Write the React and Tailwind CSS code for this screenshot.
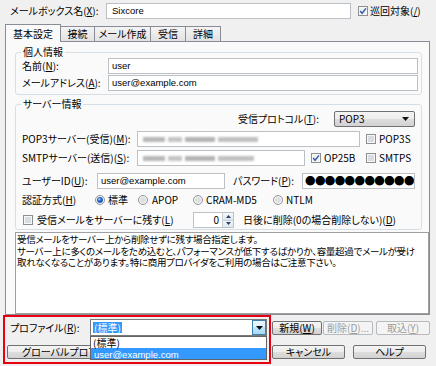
import React from "react";

function U({ children }) {
  return <span className="underline underline-offset-[1px]">{children}</span>;
}

function Check({ checked = false }) {
  return (
    <svg width="10" height="10" viewBox="0 0 10 10" className="block shrink-0">
      <rect x="0.5" y="0.5" width="9" height="9" fill="#f7f7f7" stroke="#8e8f8f" />
      <rect x="2" y="2" width="6" height="6" fill={checked ? "#eef1f5" : "#d9dde3"} />
      {checked && (
        <path d="M2.2 4.9 L4.1 7.2 L8 2.4" fill="none" stroke="#3b5fa8" strokeWidth="1.5" />
      )}
    </svg>
  );
}

function Radio({ checked = false }) {
  return (
    <svg width="10" height="10" viewBox="0 0 10 10" className="block shrink-0">
      <circle cx="5" cy="5" r="4.5" fill="#f5f5f5" stroke="#939393" />
      <circle cx="5" cy="5" r="3" fill={checked ? "#2163c4" : "#dde0e4"} />
      {checked && <circle cx="4.3" cy="4.2" r="1.2" fill="#8cc0f2" />}
    </svg>
  );
}

function Box({ className = "", children }) {
  return (
    <div
      className={
        "flex h-[16px] shrink-0 items-center overflow-hidden whitespace-nowrap border border-[#bcc0c7] bg-white px-[3px] " +
        className
      }
    >
      {children}
    </div>
  );
}

function Latin({ children }) {
  return (
    <span className="text-[9.5px] [font-family:'Liberation_Sans','Noto_Sans',sans-serif]">{children}</span>
  );
}

function Btn({ className = "", disabled = false, children }) {
  return (
    <div
      className={
        "flex shrink-0 items-center justify-center overflow-hidden whitespace-nowrap rounded-[2px] border leading-none " +
        (disabled
          ? "border-[#b6babd] bg-[#f4f4f4] text-[#9c9c9c] "
          : "border-[#707070] bg-[linear-gradient(#f4f4f4_0%,#ececec_50%,#dedede_50%,#d2d2d2_100%)] text-black ") +
        className
      }
    >
      {children}
    </div>
  );
}

function Blur({ w }) {
  return (
    <div className="flex items-center gap-[3px] pl-[2px] blur-[1.2px]">
      <span className="h-[5px] w-[22px] bg-[#b7b7b7]" />
      <span className="h-[5px] w-[14px] bg-[#c4c4c4]" />
      <span className="h-[5px] w-[30px] bg-[#b3b3b3]" />
      <span className="h-[5px] bg-[#c0c0c0]" style={{ width: w }} />
    </div>
  );
}

function ArrowDown() {
  return (
    <svg width="7" height="4" viewBox="0 0 7 4" className="block">
      <path d="M0 0 H7 L3.5 4 Z" fill="#111" />
    </svg>
  );
}

export default function App() {
  return (
    <div className="relative h-[366px] w-[436px] overflow-hidden bg-[#f0f0f0] text-[10px] leading-[12px] text-black [font-family:'Noto_Sans_CJK_JP','Noto_Sans',sans-serif] [font-feature-settings:'palt']">
      {/* header row */}
      <div className="mt-[3px] flex h-[15px] items-center">
        <span className="w-[106px] shrink-0 pl-[10px]">
          メールボックス名(<U>X</U>):
        </span>
        <Box className="h-[15px] w-[245px] pl-[5px]">
          <Latin>Sixcore</Latin>
        </Box>
        <div className="ml-[7px]">
          <Check checked />
        </div>
        <span className="ml-[2px]">
          巡回対象(<U>/</U>)
        </span>
      </div>

      {/* tabs */}
      <div className="mt-[6px] flex h-[17px] items-end pl-[5px]">
        <div className="relative z-10 -mb-px flex h-[18px] w-[56px] items-center justify-center border border-b-0 border-[#898c95] bg-[#fafafa]">
          基本設定
        </div>
        <div className="flex h-[15px] w-[34px] items-center justify-center border-t border-r border-[#898c95] bg-[linear-gradient(#f4f4f4,#e2e2e2)]">
          接続
        </div>
        <div className="flex h-[15px] w-[56px] items-center justify-center border-t border-r border-[#898c95] bg-[linear-gradient(#f4f4f4,#e2e2e2)]">
          メール作成
        </div>
        <div className="flex h-[15px] w-[35px] items-center justify-center border-t border-r border-[#898c95] bg-[linear-gradient(#f4f4f4,#e2e2e2)]">
          受信
        </div>
        <div className="flex h-[15px] w-[35px] items-center justify-center border-t border-r border-[#898c95] bg-[linear-gradient(#f4f4f4,#e2e2e2)]">
          詳細
        </div>
      </div>

      {/* panel */}
      <div className="ml-[5px] flex h-[274px] w-[425px] flex-col border border-[#898c95] bg-[#fafafa]">
        <fieldset className="mt-[4px] ml-[9px] mr-[7px] rounded-[3px] border border-[#d5dfe5] pl-[6px] pr-[3px] pb-[3px]">
          <legend className="-ml-[1px] px-[2px] leading-[12px]">個人情報</legend>
          <div className="flex h-[16px] items-center">
            <span className="w-[86px] shrink-0">
              名前(<U>N</U>):
            </span>
            <Box className="flex-1">
              <Latin>user</Latin>
            </Box>
          </div>
          <div className="mt-[1px] flex h-[16px] items-center">
            <span className="w-[86px] shrink-0">
              メールアドレス(<U>A</U>):
            </span>
            <Box className="flex-1">
              <Latin>user@example.com</Latin>
            </Box>
          </div>
        </fieldset>

        <fieldset className="mt-[3px] ml-[9px] mr-[7px] rounded-[3px] border border-[#d5dfe5] pl-[6px] pr-[3px] pb-[1px]">
          <legend className="-ml-[1px] px-[2px] leading-[12px]">サーバー情報</legend>
          {/* protocol */}
          <div className="mt-[1px] flex h-[16px] items-center justify-end pr-[3px]">
            <span>
              受信プロトコル(<U>T</U>):
            </span>
            <div className="ml-[15px] flex h-[16px] w-[81px] items-center justify-between rounded-[2px] border border-[#707070] bg-[linear-gradient(#f4f4f4_0%,#ececec_50%,#dedede_50%,#d2d2d2_100%)] pl-[4px] pr-[5px]">
              <span>POP3</span>
              <ArrowDown />
            </div>
          </div>
          {/* pop3 */}
          <div className="mt-[4px] flex h-[16px] items-center">
            <span className="w-[115px] shrink-0">
              POP3サーバー(受信)(<U>M</U>):
            </span>
            <Box className="w-[223px]">
              <Blur w="40px" />
            </Box>
            <div className="ml-[6px]">
              <Check />
            </div>
            <span className="ml-[3px]">POP3S</span>
          </div>
          {/* smtp */}
          <div className="mt-[3px] flex h-[16px] items-center">
            <span className="w-[115px] shrink-0">
              SMTPサーバー(送信)(<U>S</U>):
            </span>
            <Box className="w-[168px]">
              <Blur w="36px" />
            </Box>
            <div className="ml-[6px] flex w-[55px] shrink-0 items-center">
              <Check checked />
              <span className="ml-[3px]">OP25B</span>
            </div>
            <Check />
            <span className="ml-[3px]">SMTPS</span>
          </div>
          {/* user */}
          <div className="mt-[7px] flex h-[16px] items-center">
            <span className="w-[75px] shrink-0">
              ユーザーID(<U>U</U>):
            </span>
            <Box className="w-[128px]">
              <Latin>user@example.com</Latin>
            </Box>
            <span className="ml-[8px] w-[69px] shrink-0">
              パスワード(<U>P</U>):
            </span>
            <Box className="w-[113px] pl-[2px] text-[10.5px] tracking-[-0.6px]">●●●●●●●●●●●●</Box>
          </div>
          {/* auth */}
          <div className="mt-[4px] flex h-[14px] items-center">
            <span className="w-[73px] shrink-0">
              認証方式(<U>H</U>)
            </span>
            <div className="flex w-[43px] shrink-0 items-center">
              <Radio checked />
              <span className="ml-[3px]">標準</span>
            </div>
            <div className="flex w-[55px] shrink-0 items-center">
              <Radio />
              <span className="ml-[4px]">APOP</span>
            </div>
            <div className="flex w-[80px] shrink-0 items-center">
              <Radio />
              <span className="ml-[3px]">CRAM-MD5</span>
            </div>
            <div className="flex items-center">
              <Radio />
              <span className="ml-[3px]">NTLM</span>
            </div>
          </div>
          {/* keep */}
          <div className="mt-[5px] flex h-[16px] items-center">
            <div className="ml-[1px]">
              <Check />
            </div>
            <span className="ml-[4px] w-[156px] shrink-0">
              受信メールをサーバーに残す(<U>L</U>)
            </span>
            <div className="flex h-[16px] w-[41px] shrink-0 items-center justify-end border border-[#bcc0c7] bg-white">
              <span className="mr-[3px]">0</span>
              <div className="flex h-[14px] w-[11px] flex-col border-l border-[#c9cdd3]">
                <div className="flex flex-1 items-center justify-center border-b border-[#c9cdd3] bg-[linear-gradient(#f6f9fc,#dbe6f2)]">
                  <svg width="5" height="3" viewBox="0 0 5 3" className="block">
                    <path d="M0 3 H5 L2.5 0 Z" fill="#2c3e5a" />
                  </svg>
                </div>
                <div className="flex flex-1 items-center justify-center bg-[linear-gradient(#f6f9fc,#dbe6f2)]">
                  <svg width="5" height="3" viewBox="0 0 5 3" className="block">
                    <path d="M0 0 H5 L2.5 3 Z" fill="#2c3e5a" />
                  </svg>
                </div>
              </div>
            </div>
            <span className="ml-[9px]">
              日後に削除(0の場合削除しない)(<U>D</U>)
            </span>
          </div>
        </fieldset>

        {/* description */}
        <div className="mt-[2px] ml-[9px] flex-1 overflow-hidden whitespace-nowrap border border-[#a0a0a0] bg-white pl-[1px] pt-[1px] text-[9.5px] leading-[11.5px] tracking-[-0.3px]">
          <div>受信メールをサーバー上から削除せずに残す場合指定します。</div>
          <div>サーバー上に多くのメールをため込むと、パフォーマンスが低下するばかりか、容量超過でメールが受け</div>
          <div>取れなくなることがあります。特に商用プロバイダをご利用の場合はご注意下さい。</div>
        </div>
      </div>

      {/* bottom row 1 */}
      <div className="mt-[4px] flex h-[17px] items-center">
        <span className="w-[90px] shrink-0 pl-[10px]">
          プロファイル(<U>R</U>):
        </span>
        <div className="flex h-[17px] w-[177px] shrink-0 items-center border border-[#7a7a7a] bg-white pl-[2px]">
          <span className="bg-[#3399ff] px-[1px] leading-[11px] text-white">(標準)</span>
          <div className="ml-auto flex h-[15px] w-[14px] items-center justify-center border border-[#3c7fb1] bg-[linear-gradient(#eaf6fd_0%,#d9f0fc_50%,#bee6fd_50%,#a7d9f5_100%)]">
            <ArrowDown />
          </div>
        </div>
        <Btn className="ml-[5px] h-[14px] w-[50px] border-[#2b2b2b]">
          新規(<U>W</U>)
        </Btn>
        <Btn disabled className="ml-[1px] h-[14px] w-[50px]">
          削除(<U>D</U>)...
        </Btn>
        <Btn disabled className="ml-[3px] h-[14px] w-[54px]">
          取込(<U>Y</U>)
        </Btn>
      </div>

      {/* bottom row 2 */}
      <div className="mt-[9px] flex h-[14px] items-center pl-[7px]">
        <Btn className="h-[14px] w-[86px] justify-start pl-[14px]">グローバルプロファイル</Btn>
        <div className="w-[179px] shrink-0" />
        <Btn className="h-[14px] w-[73px]">キャンセル</Btn>
        <Btn className="ml-[8px] h-[14px] w-[73px]">ヘルプ</Btn>
      </div>

      {/* open dropdown list */}
      <div className="absolute left-[90px] top-[336px] z-20 h-[24px] w-[177px] border border-[#646464] bg-white">
        <div className="h-[11px] pl-[2px] leading-[11px]">(標準)</div>
        <div className="h-[11px] bg-[#3399ff] pl-[3px] leading-[11px] text-white">
          <Latin>user@example.com</Latin>
        </div>
      </div>

      {/* red highlight frame */}
      <div className="pointer-events-none absolute left-[3px] top-[315px] z-30 h-[49px] w-[268px] border-2 border-[#e60012]" />
    </div>
  );
}
